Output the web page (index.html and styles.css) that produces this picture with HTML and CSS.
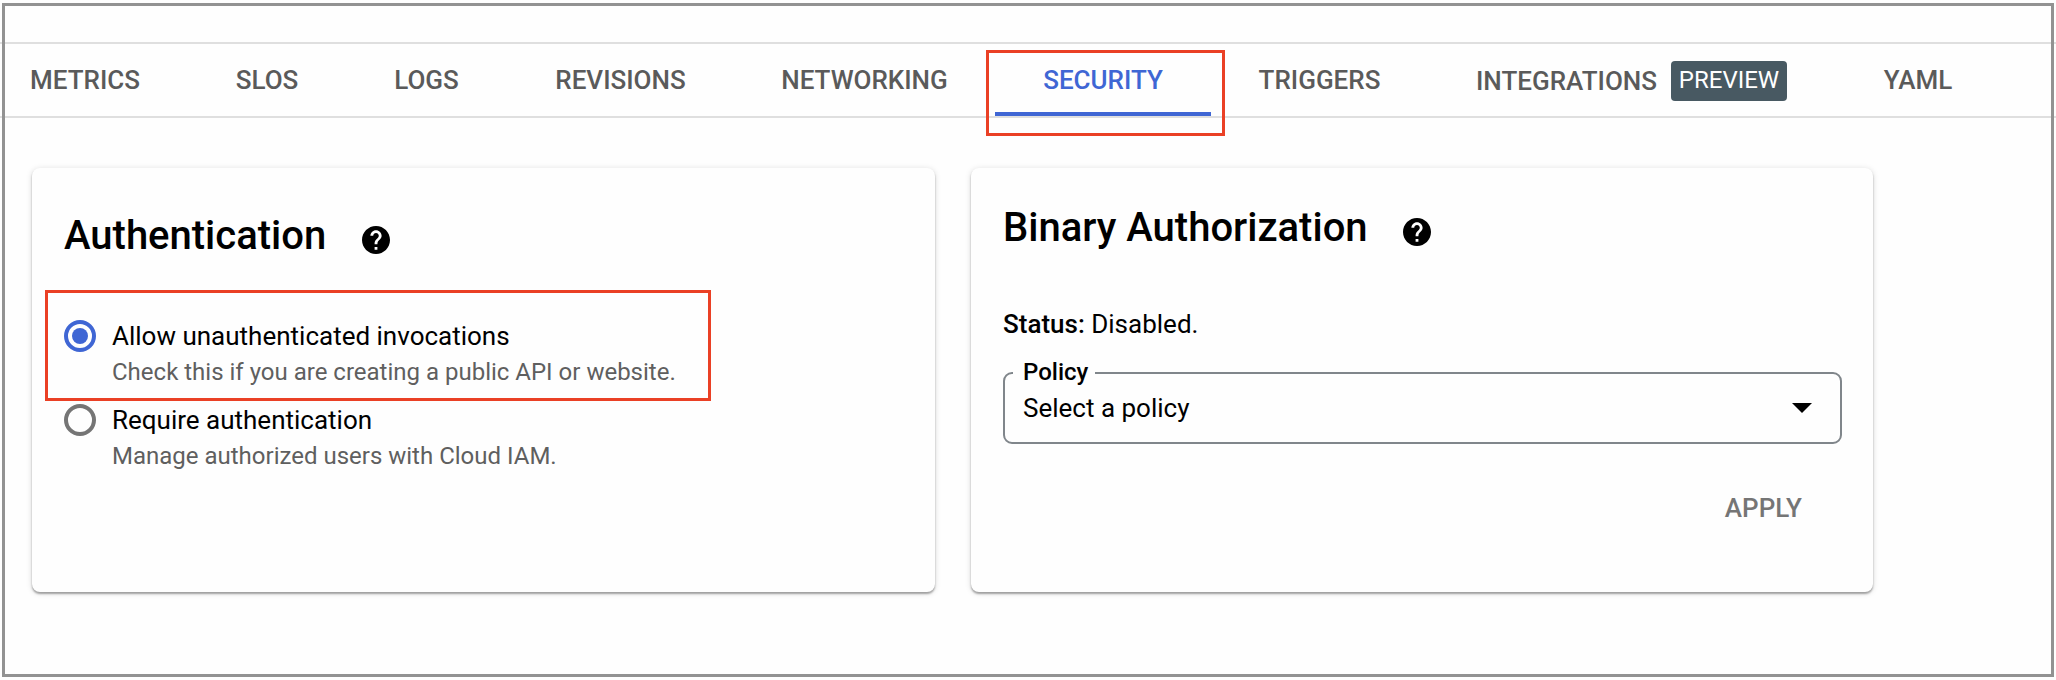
FILE: index.html
```html
<!DOCTYPE html>
<html lang="en">
<head>
<meta charset="utf-8">
<title>Security</title>
<link rel="stylesheet" href="styles.css">
</head>
<body>
<div class="page">
  <nav class="tabs">
    <a class="tab tab-metrics"><span>METRICS</span></a>
    <a class="tab tab-slos"><span>SLOS</span></a>
    <a class="tab tab-logs"><span>LOGS</span></a>
    <a class="tab tab-revisions"><span>REVISIONS</span></a>
    <a class="tab tab-networking"><span>NETWORKING</span></a>
    <a class="tab tab-security active"><span>SECURITY</span><i class="callout callout-tab"></i></a>
    <a class="tab tab-triggers"><span>TRIGGERS</span></a>
    <a class="tab tab-integrations"><span>INTEGRATIONS</span><b class="badge">PREVIEW</b></a>
    <a class="tab tab-yaml"><span>YAML</span></a>
  </nav>
  <main class="cards">
    <section class="card auth">
      <header class="head">
        <h2>Authentication</h2>
        <svg class="help" viewBox="2 2 20 20"><path d="M12 2C6.48 2 2 6.48 2 12s4.48 10 10 10 10-4.48 10-10S17.52 2 12 2zm1 17h-2v-2h2v2zm2.07-7.75l-.9.92C13.45 12.9 13 13.5 13 15h-2v-.5c0-1.1.45-2.1 1.17-2.83l1.24-1.26c.37-.36.59-.86.59-1.41 0-1.1-.9-2-2-2s-2 .9-2 2H8c0-2.21 1.79-4 4-4s4 1.79 4 4c0 .88-.36 1.68-.93 2.25z"/></svg>
      </header>
      <div class="option">
        <i class="callout callout-option"></i>
        <span class="radio checked"></span>
        <div><p class="label">Allow unauthenticated invocations</p><p class="hint">Check this if you are creating a public API or website.</p></div>
      </div>
      <div class="option">
        <span class="radio"></span>
        <div><p class="label">Require authentication</p><p class="hint">Manage authorized users with Cloud IAM.</p></div>
      </div>
    </section>
    <section class="card binary">
      <header class="head">
        <h2>Binary Authorization</h2>
        <svg class="help" viewBox="2 2 20 20"><path d="M12 2C6.48 2 2 6.48 2 12s4.48 10 10 10 10-4.48 10-10S17.52 2 12 2zm1 17h-2v-2h2v2zm2.07-7.75l-.9.92C13.45 12.9 13 13.5 13 15h-2v-.5c0-1.1.45-2.1 1.17-2.83l1.24-1.26c.37-.36.59-.86.59-1.41 0-1.1-.9-2-2-2s-2 .9-2 2H8c0-2.21 1.79-4 4-4s4 1.79 4 4c0 .88-.36 1.68-.93 2.25z"/></svg>
      </header>
      <p class="status"><strong>Status:</strong> Disabled.</p>
      <div class="field">
        <span class="legend">Policy</span>
        <span class="value">Select a policy</span>
        <svg class="arrow" viewBox="0 0 20 10"><path d="M0 0h20L10 10z"/></svg>
      </div>
      <div class="actions"><span class="apply">APPLY</span></div>
    </section>
  </main>
  <div class="frame"></div>
</div>
</body>
</html>
```
FILE: styles.css
```css
* { box-sizing: border-box; margin: 0; padding: 0; }
body { background: #fefefe; font-family: Roboto, "Liberation Sans", sans-serif; font-size: 26px; color: #000; }
.page { position: relative; width: 2056px; height: 680px; padding-top: 42px; overflow: hidden; }
.frame { position: absolute; left: 2px; top: 3px; width: 2052px; height: 674px; border: 3px solid #929292; }

.tabs { display: flex; height: 76px; border-top: 2px solid #dfdfdf; border-bottom: 2px solid #dfdfdf; }
.tab { position: relative; display: flex; align-items: center; justify-content: center; height: 72px; padding-bottom: 1px; font-weight: 500; color: #5a5a5a; white-space: nowrap; }
.tab-metrics { width: 187px; padding-right: 17px; }
.tab-slos { width: 159px; padding-left: 1px; }
.tab-logs { width: 161px; }
.tab-revisions { width: 227px; }
.tab-networking { width: 261px; }
.tab-security { width: 216px; }
.tab-triggers { width: 217px; }
.tab-integrations { width: 408px; padding: 2px 1px 0 0; }
.tab-yaml { width: 164px; }
.tab.active { color: #3f66d4; }
.tab.active::after { content: ""; position: absolute; left: 0; right: 0; bottom: 0; height: 4px; background: #3f66d4; }
.badge { height: 40px; width: 116px; margin-left: 14px; border-radius: 4px; background: #485962; color: #fff; font-size: 24px; font-weight: 400; line-height: 39px; text-align: center; }

.callout { position: absolute; z-index: 2; border: 3px solid #ea4025; }
.callout-tab { left: -9px; top: 6px; width: 239px; height: 86px; }
.callout-option { left: -19px; top: -30px; width: 666px; height: 111px; }

.cards { display: flex; gap: 36px; padding: 50px 0 0 32px; }
.card { height: 424px; border-radius: 8px; background: #fefefe; box-shadow: 0 2px 2px rgba(0,0,0,.32), 0 1px 6px rgba(0,0,0,.14); }
.auth { width: 903px; padding: 40px 32px 0; }
.binary { width: 902px; padding: 32px 32px 0; }
.head { display: flex; align-items: center; height: 56px; }
.head h2 { font-size: 40px; font-weight: 500; line-height: 56px; white-space: nowrap; }
.help { width: 28px; height: 28px; margin: 8px 0 0 36px; }
.binary .help { margin-left: 35px; }

.option { position: relative; display: flex; height: 84px; }
.auth .head { margin-bottom: 56px; }
.radio { flex: none; display: flex; align-items: center; justify-content: center; width: 32px; height: 32px; margin-right: 16px; border: 4px solid #757575; border-radius: 50%; }
.radio.checked { border-color: #3f66d4; }
.radio.checked::after { content: ""; width: 16px; height: 16px; border-radius: 50%; background: #3f66d4; }
.label { line-height: 32px; white-space: nowrap; }
.hint { margin-top: 2px; font-size: 24px; line-height: 36px; color: #5f5f5f; white-space: nowrap; }

.status { margin-top: 52px; line-height: 32px; }
.status strong { font-weight: 500; }
.field { position: relative; display: flex; align-items: center; justify-content: space-between; width: 839px; height: 72px; margin-top: 32px; padding: 0 28px 0 18px; border: 2px solid #80868b; border-radius: 9px; }
.value { line-height: 32px; }
.arrow { width: 20px; height: 10px; }
.legend { position: absolute; left: 8px; top: -18px; width: 82px; padding-left: 10px; background: #fefefe; font-size: 24px; font-weight: 500; line-height: 32px; }
.actions { display: flex; justify-content: flex-end; padding: 48px 39px 0 0; }
.apply { font-weight: 500; line-height: 32px; color: #757575; }
```
